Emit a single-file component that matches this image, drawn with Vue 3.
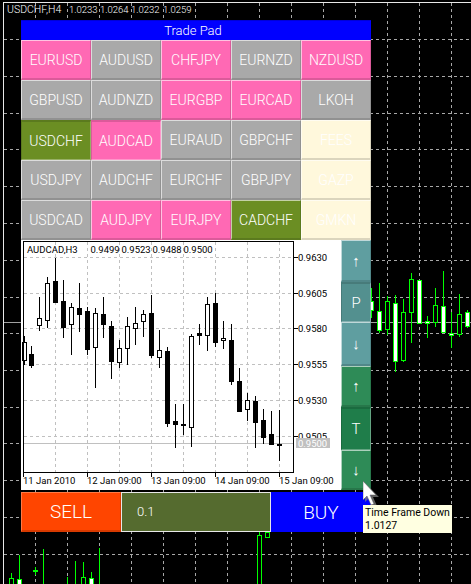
<script setup>
const rows = [
  [['EURUSD', 'pink'], ['AUDUSD', 'gray'], ['CHFJPY', 'pink'], ['EURNZD', 'gray'], ['NZDUSD', 'pink']],
  [['GBPUSD', 'gray'], ['AUDNZD', 'gray'], ['EURGBP', 'pink'], ['EURCAD', 'pink'], ['LKOH', 'gray']],
  [['USDCHF', 'olive pressed'], ['AUDCAD', 'pink pressed'], ['EURAUD', 'gray'], ['GBPCHF', 'gray'], ['FEES', 'silk']],
  [['USDJPY', 'gray'], ['AUDCHF', 'gray'], ['EURCHF', 'gray'], ['GBPJPY', 'gray'], ['GAZP', 'silk']],
  [['USDCAD', 'gray'], ['AUDJPY', 'pink'], ['EURJPY', 'pink'], ['CADCHF', 'olive'], ['GMKN', 'silk']]
]
const pairs = rows.flat().map(([name, tone]) => ({ name, tone }))

const side = [
  { label: '↑', tone: 'teal' },
  { label: 'P', tone: 'teal pressed' },
  { label: '↓', tone: 'teal' },
  { label: '↑', tone: 'sea' },
  { label: 'T', tone: 'sea pressed' },
  { label: '↓', tone: 'sea' }
]

const range = (start, step, count) => Array.from({ length: count }, (_, i) => start + step * i)
const outerH = [39, 76, 113, 149, 186, 223, 260, 297, 333, 370, 407, 443, 480, 517, 554]
const outerV = range(35, 32, 14)
const headerQuotes = [
  { x: 69, t: '1.0233' },
  { x: 100, t: '1.0264' },
  { x: 131, t: '1.0232' },
  { x: 163, t: '1.0259' }
]

// x, wick top, wick bottom, body top, body bottom, filled
const outerCandles = [
  [371, 288, 318, 301, 310, 1],
  [379, 283, 333, 311, 330, 1],
  [387, 296, 335, 301, 329, 0],
  [395, 295, 372, 303, 361, 1],
  [403, 299, 362, 312, 360, 0],
  [411, 273, 343, 279, 312, 0],
  [419, 280, 323, 280, 323, 1],
  [427, 316, 338, 321, 323, 1],
  [435, 288, 327, 305, 322, 0],
  [443, 271, 333, 306, 332, 1],
  [451, 312, 348, 333, 335, 1],
  [459, 294, 337, 314, 334, 0],
  [467, 310, 328, 312, 326, 1],
  [11, 573, 584, 578, 590, 0],
  [19, 555, 584, 579, 590, 1],
  [35, 567, 575, 570, 571, 0],
  [43, 549, 584, 590, 591, 0],
  [67, 577, 584, 590, 591, 0],
  [75, 561, 584, 590, 591, 0],
  [83, 562, 584, 577, 590, 0],
  [91, 572, 584, 578, 590, 1],
  [99, 548, 584, 590, 591, 0],
  [259, 532, 584, 535, 590, 0],
  [267, 532, 538, 532, 537, 0]
]

const chartOx = 21
const chartOy = 240
const hGrid = [257, 293, 328, 364, 400, 436].map((y) => y - chartOy)
const vGrid = range(55, 32, 8).map((x) => x - chartOx)
const prices = [
  { y: 257, t: '0.9630' },
  { y: 293, t: '0.9605' },
  { y: 328, t: '0.9580' },
  { y: 364, t: '0.9555' },
  { y: 400, t: '0.9530' },
  { y: 436, t: '0.9505' }
].map((p) => ({ ...p, y: p.y - chartOy }))
const times = [
  { x: 23, t: '11 Jan 2010' },
  { x: 87, t: '12 Jan 09:00' },
  { x: 151, t: '13 Jan 09:00' },
  { x: 215, t: '14 Jan 09:00' },
  { x: 279, t: '15 Jan 09:00' }
].map((p) => ({ ...p, x: p.x - chartOx }))
const innerQuotes = [
  { x: 54.5, t: '0.9499' },
  { x: 85.5, t: '0.9523' },
  { x: 116.5, t: '0.9488' },
  { x: 147.5, t: '0.9500' }
]

// x, wick top, wick bottom, body top, body bottom, hollow
const candles = [
  [24, 336, 365, 342, 360, 1],
  [31, 346, 368, 354, 365, 0],
  [39, 297, 331, 318, 325, 1],
  [47, 277, 328, 283, 320, 1],
  [55, 258, 303, 281, 302, 0],
  [63, 280, 338, 301, 327, 0],
  [71, 303, 355, 307, 324, 1],
  [79, 283, 332, 308, 314, 0],
  [87, 307, 355, 311, 349, 0],
  [95, 308, 388, 313, 347, 1],
  [103, 297, 338, 314, 324, 0],
  [111, 321, 379, 326, 361, 0],
  [119, 340, 368, 348, 362, 1],
  [127, 317, 365, 326, 348, 1],
  [135, 307, 345, 323, 328, 1],
  [143, 310, 337, 314, 321, 1],
  [151, 295, 358, 313, 355, 0],
  [159, 330, 368, 350, 357, 1],
  [167, 347, 427, 351, 423, 0],
  [175, 404, 448, 421, 424, 0],
  [183, 404, 435, 424, 425, 0],
  [191, 334, 447, 336, 427, 1],
  [199, 324, 345, 333, 335, 0],
  [207, 297, 351, 304, 335, 1],
  [215, 293, 347, 303, 342, 0],
  [223, 321, 349, 338, 340, 1],
  [231, 324, 385, 340, 381, 0],
  [239, 368, 412, 381, 411, 0],
  [247, 393, 421, 400, 409, 1],
  [255, 396, 448, 401, 422, 0],
  [263, 409, 444, 420, 437, 0],
  [271, 411, 445, 434, 444, 0],
  [279, 410, 461, 444, 445, 0]
].map(([x, a, b, c, d, e]) => [x - chartOx, a - chartOy, b - chartOy, c - chartOy, d - chartOy, e])
</script>

<template>
  <div class="screen">
    <svg class="backdrop" width="471" height="584" viewBox="0 0 471 584">
      <g class="grid">
        <line v-for="y in outerH" :key="'h' + y" x1="4" x2="471" :y1="y + 0.5" :y2="y + 0.5" />
        <line v-for="x in outerV" :key="'v' + x" y1="3" y2="584" :x1="x + 0.5" :x2="x + 0.5" />
      </g>
      <line class="frame" x1="3.5" x2="3.5" y1="2" y2="584" />
      <line class="frame" x1="3" x2="471" y1="2.5" y2="2.5" />
      <line class="bid" x1="4" x2="471" y1="322.5" y2="322.5" />
      <g v-for="c in outerCandles" :key="'c' + c[0]">
        <line class="wick" :x1="c[0] + 0.5" :x2="c[0] + 0.5" :y1="c[1]" :y2="c[2]" />
        <rect
          :class="c[5] ? 'body-up' : 'body-down'"
          :x="c[0] - 1.5"
          :y="c[3] + 0.5"
          width="4"
          :height="c[4] - c[3]"
        />
      </g>
      <text class="quote head" x="7" y="13">USDCHF,H4</text>
      <text v-for="q in headerQuotes" :key="q.x" class="quote" :x="q.x" y="13">{{ q.t }}</text>
    </svg>

    <main class="pad">
      <header class="title">Trade Pad</header>
      <section class="pairs">
        <button v-for="p in pairs" :key="p.name" class="key" :class="p.tone">{{ p.name }}</button>
      </section>

      <section class="middle">
        <div class="chart">
          <svg width="320" height="250" viewBox="0 0 320 250">
            <g class="inner-grid">
              <line v-for="y in hGrid" :key="'ih' + y" x1="3" x2="272" :y1="y + 0.5" :y2="y + 0.5" />
              <line v-for="x in vGrid" :key="'iv' + x" y1="2" y2="232" :x1="x + 0.5" :x2="x + 0.5" />
            </g>
            <line class="price-line" x1="3" x2="272" y1="203.5" y2="203.5" />
            <g v-for="c in candles" :key="'k' + c[0]">
              <line class="stem" :x1="c[0] + 0.5" :x2="c[0] + 0.5" :y1="c[1]" :y2="c[2]" />
              <rect
                :class="c[5] ? 'hollow' : 'solid'"
                :x="c[0] - 1.5"
                :y="c[3] + 0.5"
                width="4"
                :height="c[4] - c[3]"
              />
            </g>
            <rect class="axis" x="2.5" y="1.5" width="270" height="231" />
            <line v-for="p in prices" :key="'pt' + p.y" class="tick" x1="272" x2="277" :y1="p.y + 0.5" :y2="p.y + 0.5" />
            <line v-for="p in times" :key="'tt' + p.x" class="tick" y1="232" y2="237" :x1="p.x + 0.5" :x2="p.x + 0.5" />
            <text v-for="p in prices" :key="'pl' + p.y" class="label" x="277" :y="p.y + 4">{{ p.t }}</text>
            <rect class="price-tag" x="275" y="198" width="34" height="10" />
            <text class="label tag" x="277" y="207">0.9500</text>
            <text v-for="p in times" :key="'tl' + p.x" class="label" :x="p.x" y="244">{{ p.t }}</text>
            <text class="label" x="6" y="13">AUDCAD,H3</text>
            <text v-for="q in innerQuotes" :key="q.x" class="label" :x="q.x + 15" y="13">{{ q.t }}</text>
          </svg>
        </div>
        <div class="side">
          <button v-for="(b, i) in side" :key="i" class="key side-key" :class="b.tone">{{ b.label }}</button>
        </div>
      </section>

      <footer class="order">
        <button class="key trade sell">SELL</button>
        <div class="lot">0.1</div>
        <button class="key trade buy">BUY</button>
      </footer>
    </main>

    <svg class="cursor" width="18" height="28" viewBox="0 0 18 28">
      <path class="cursor-shadow" d="M2 2V21L6 17L10 26L14 25L10 16H16Z" />
      <path class="cursor-arrow" d="M0 0V19L4 15L8 24L11 23L7 14H13Z" />
    </svg>
    <div class="tooltip">Time Frame Down<br />1.0127</div>
  </div>
</template>

<style scoped>
.screen {
  position: relative;
  width: 471px;
  height: 584px;
  overflow: hidden;
  box-sizing: border-box;
  padding: 20px 0 0 21px;
  background: #000;
  font-family: Roboto, "Liberation Sans", sans-serif;
}
.backdrop {
  position: absolute;
  left: 0;
  top: 0;
  shape-rendering: crispEdges;
}
.grid line {
  stroke: #a8a8a8;
  stroke-width: 1;
  stroke-dasharray: 3 3;
}
.frame {
  stroke: #e8e8e8;
  stroke-width: 1;
}
.bid {
  stroke: #a0a0a0;
}
.wick {
  stroke: #00ff00;
  stroke-width: 1;
}
.body-up {
  fill: #fff;
  stroke: #00ff00;
  stroke-width: 1;
}
.body-down {
  fill: #000;
  stroke: #00ff00;
  stroke-width: 1;
}
.quote {
  fill: #fff;
  font-size: 9.5px;
  font-weight: 300;
}
.quote.head {
  font-size: 10.5px;
}
.pad {
  position: relative;
  width: 350px;
}
.title {
  box-sizing: border-box;
  height: 20px;
  padding-right: 6px;
  line-height: 19px;
  background: #0000ff;
  border-top: 1px solid #0000d8;
  color: #fff;
  font-size: 13px;
  font-weight: 300;
  text-align: center;
}
.pairs {
  display: grid;
  grid-template-columns: repeat(5, 70px);
  grid-auto-rows: 40px;
}
.key {
  box-sizing: border-box;
  margin: 0;
  padding: 0;
  color: #fff;
  font-family: inherit;
  font-size: 14px;
  font-weight: 300;
  border-style: solid;
  border-width: 1px 1px 2px 1px;
  border-color: rgba(255, 255, 255, 0.6) rgba(0, 0, 0, 0.14) rgba(0, 0, 0, 0.14) rgba(255, 255, 255, 0.6);
}
.key.pressed {
  border-width: 2px 1px 1px 1px;
  border-color: rgba(0, 0, 0, 0.14) rgba(255, 255, 255, 0.3) rgba(255, 255, 255, 0.3) rgba(0, 0, 0, 0.14);
}
.pink {
  background: #ff69b4;
}
.gray {
  background: #a9a9a9;
}
.olive {
  background: #6b8e23;
}
.silk {
  background: #fff8dc;
}
.teal {
  background: #5f9ea0;
}
.teal.pressed {
  background: #53908f;
}
.sea {
  background: #2e8b57;
}
.sea.pressed {
  background: #1f7d4a;
}
.middle {
  display: flex;
  height: 250px;
}
.chart {
  width: 320px;
  background: #fff;
}
.chart svg {
  display: block;
  shape-rendering: crispEdges;
}
.inner-grid line {
  stroke: #c0c0c0;
  stroke-dasharray: 3 3;
}
.price-line {
  stroke: #c0c0c0;
}
.stem,
.tick {
  stroke: #000;
}
.solid {
  fill: #000;
  stroke: #000;
}
.hollow {
  fill: #fff;
  stroke: #000;
}
.axis {
  fill: none;
  stroke: #000;
}
.label {
  fill: #000;
  font-size: 9.5px;
}
.label.tag {
  fill: #fff;
}
.price-tag {
  fill: #c0c0c0;
}
.side {
  display: grid;
  width: 30px;
  grid-template-rows: 42px 40px 44px 41px 43px 40px;
}
.side-key {
  width: 30px;
  font-size: 15px;
}
.order {
  display: flex;
  height: 40px;
  margin-top: 2px;
}
.trade {
  width: 100px;
  font-size: 19px;
}
.sell {
  background: #ff4500;
  border-color: #ff7a45 #d83a00 #d83a00 #ff7a45;
}
.buy {
  background: #0000ff;
  border: 0;
}
.lot {
  box-sizing: border-box;
  width: 150px;
  padding-left: 15px;
  border: 1px solid #e8e8e8;
  background: #556b2f;
  color: #fff;
  font-size: 13px;
  font-weight: 300;
  line-height: 38px;
}
.cursor {
  position: absolute;
  left: 363px;
  top: 481px;
}
.cursor-shadow {
  fill: rgba(128, 128, 128, 0.75);
}
.cursor-arrow {
  fill: #fff;
  stroke: #555;
  stroke-width: 0.5;
}
.tooltip {
  position: absolute;
  left: 363px;
  top: 505px;
  box-sizing: border-box;
  width: 89px;
  height: 28px;
  padding: 1px 0 0 2px;
  background: #ffffe1;
  color: #000;
  font-size: 10.5px;
  line-height: 13px;
}
</style>
